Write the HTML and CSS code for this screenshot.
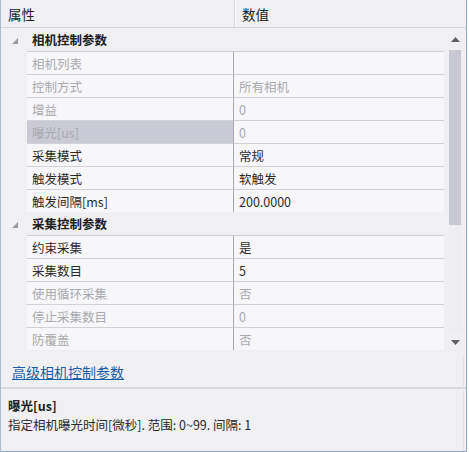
FILE: index.html
```html
<!DOCTYPE html>
<html lang="zh">
<head>
<meta charset="utf-8">
<link rel="stylesheet" href="styles.css">
</head>
<body>
<div class="panel">
  <div class="grid">
    <div class="header">
      <div class="h-name">属性</div>
      <div class="h-value">数值</div>
    </div>
    <div class="body">
      <div class="rows">
        <div class="cat"><div class="tri"><svg width="6" height="6" viewBox="0 0 6 6"><path d="M6 0V6H0Z" fill="#9a9aa0"/></svg></div><div class="cat-label">相机控制参数</div></div>
        <div class="row dis"><div class="gut"></div><div class="name">相机列表</div><div class="val"></div></div>
        <div class="row dis"><div class="gut"></div><div class="name">控制方式</div><div class="val">所有相机</div></div>
        <div class="row dis"><div class="gut"></div><div class="name">增益</div><div class="val">0</div></div>
        <div class="row dis sel"><div class="gut"></div><div class="name">曝光[us]</div><div class="val">0</div></div>
        <div class="row"><div class="gut"></div><div class="name">采集模式</div><div class="val">常规</div></div>
        <div class="row"><div class="gut"></div><div class="name">触发模式</div><div class="val">软触发</div></div>
        <div class="row"><div class="gut"></div><div class="name">触发间隔[ms]</div><div class="val">200.0000</div></div>
        <div class="cat"><div class="tri"><svg width="6" height="6" viewBox="0 0 6 6"><path d="M6 0V6H0Z" fill="#9a9aa0"/></svg></div><div class="cat-label">采集控制参数</div></div>
        <div class="row"><div class="gut"></div><div class="name">约束采集</div><div class="val">是</div></div>
        <div class="row"><div class="gut"></div><div class="name">采集数目</div><div class="val">5</div></div>
        <div class="row dis"><div class="gut"></div><div class="name">使用循环采集</div><div class="val">否</div></div>
        <div class="row dis"><div class="gut"></div><div class="name">停止采集数目</div><div class="val">0</div></div>
        <div class="row dis"><div class="gut"></div><div class="name">防覆盖</div><div class="val">否</div></div>
      </div>
      <div class="scrollbar">
        <div class="arrow"><svg width="9" height="5" viewBox="0 0 9 5"><path d="M4.5 0L9 5H0Z" fill="#606066"/></svg></div>
        <div class="track"><div class="thumb"></div></div>
        <div class="arrow"><svg width="9" height="5" viewBox="0 0 9 5"><path d="M0 0H9L4.5 5Z" fill="#606066"/></svg></div>
      </div>
    </div>
  </div>
  <div class="link-panel"><a class="link" href="#">高级相机控制参数</a></div>
  <div class="splitter"></div>
  <div class="desc">
    <div class="desc-title">曝光[us]</div>
    <div class="desc-text">指定相机曝光时间[微秒]. 范围: 0~99. 间隔: 1</div>
  </div>
</div>
</body>
</html>
```

FILE: styles.css
```css
html, body {
  margin: 0;
  padding: 0;
  background: #ffffff;
}
body {
  font-family: "Noto Sans CJK SC", "Noto Sans", sans-serif;
  font-size: 12.5px;
  color: #2b2b2b;
}
.panel {
  width: 465px;
  height: 451px;
  border-left: 1px solid #a9bbd0;
  border-right: 1px solid #8ea6c2;
  border-bottom: 1px solid #8ea6c2;
  background: #f0f0f3;
  display: flex;
  flex-direction: column;
  box-sizing: content-box;
}
.grid {
  height: 353px;
  display: flex;
  flex-direction: column;
}
.header {
  height: 28px;
  display: grid;
  grid-template-columns: 234px 1fr;
  border-bottom: 1px solid #d6d6dc;
  box-sizing: border-box;
  background: #f0f0f2;
  font-size: 13.5px;
  color: #222222;
}
.h-name {
  padding-left: 7px;
  display: flex;
  align-items: center;
  border-right: 1px solid #dcdce2;
}
.h-value {
  padding-left: 6px;
  display: flex;
  align-items: center;
  border-left: 1px solid #fafafc;
}
.body {
  flex: 1;
  display: flex;
}
.rows {
  width: 443px;
  display: flex;
  flex-direction: column;
}
.cat, .row {
  height: 23px;
  display: grid;
  grid-template-columns: 26px 207px 1fr;
}
.cat {
  background: #f0f0f3;
  font-weight: bold;
  color: #202020;
}
.tri {
  padding-left: 11px;
  padding-top: 2px;
  display: flex;
  align-items: center;
}
.cat-label {
  grid-column: 2 / 4;
  padding-left: 5px;
  display: flex;
  align-items: center;
}
.gut {
  background: #f0f0f3;
}
.name, .val {
  display: flex;
  align-items: center;
  border-top: 1px solid #d2d2d6;
  background: #f7f7f9;
}
.name {
  padding-left: 5px;
  border-right: 1px solid #a9a9ad;
}
.val {
  padding-left: 5px;
}
.dis .name, .dis .val {
  color: #a9a9ae;
}
.sel .name {
  background: #c9cad5;
}
.scrollbar {
  width: 22px;
  display: flex;
  flex-direction: column;
  padding-left: 5px;
  box-sizing: border-box;
}
.arrow {
  width: 13px;
  height: 22px;
  display: flex;
  align-items: center;
  justify-content: center;
}
.track {
  flex: 1;
  width: 13px;
  background: #eeeef2;
}
.thumb {
  height: 175px;
  width: 12px;
  background: #c8c8d2;
}
.link-panel {
  margin-top: 4px;
  height: 30px;
  margin-right: 2px;
  border-right: 1px solid #e2e2e6;
  display: flex;
  align-items: center;
  padding-left: 11px;
}
.link {
  font-size: 14px;
  color: #1b5fa6;
  text-decoration: underline;
}
.splitter {
  height: 2px;
  background: #dadade;
  margin-bottom: 2px;
}
.desc {
  flex: 1;
  margin-right: 2px;
  border-right: 1px solid #e2e2e6;
  padding: 5px 0 0 7px;
}
.desc-title {
  font-weight: bold;
  line-height: 20px;
  color: #202020;
}
.desc-text {
  line-height: 18px;
  color: #2b2b2b;
}
```
